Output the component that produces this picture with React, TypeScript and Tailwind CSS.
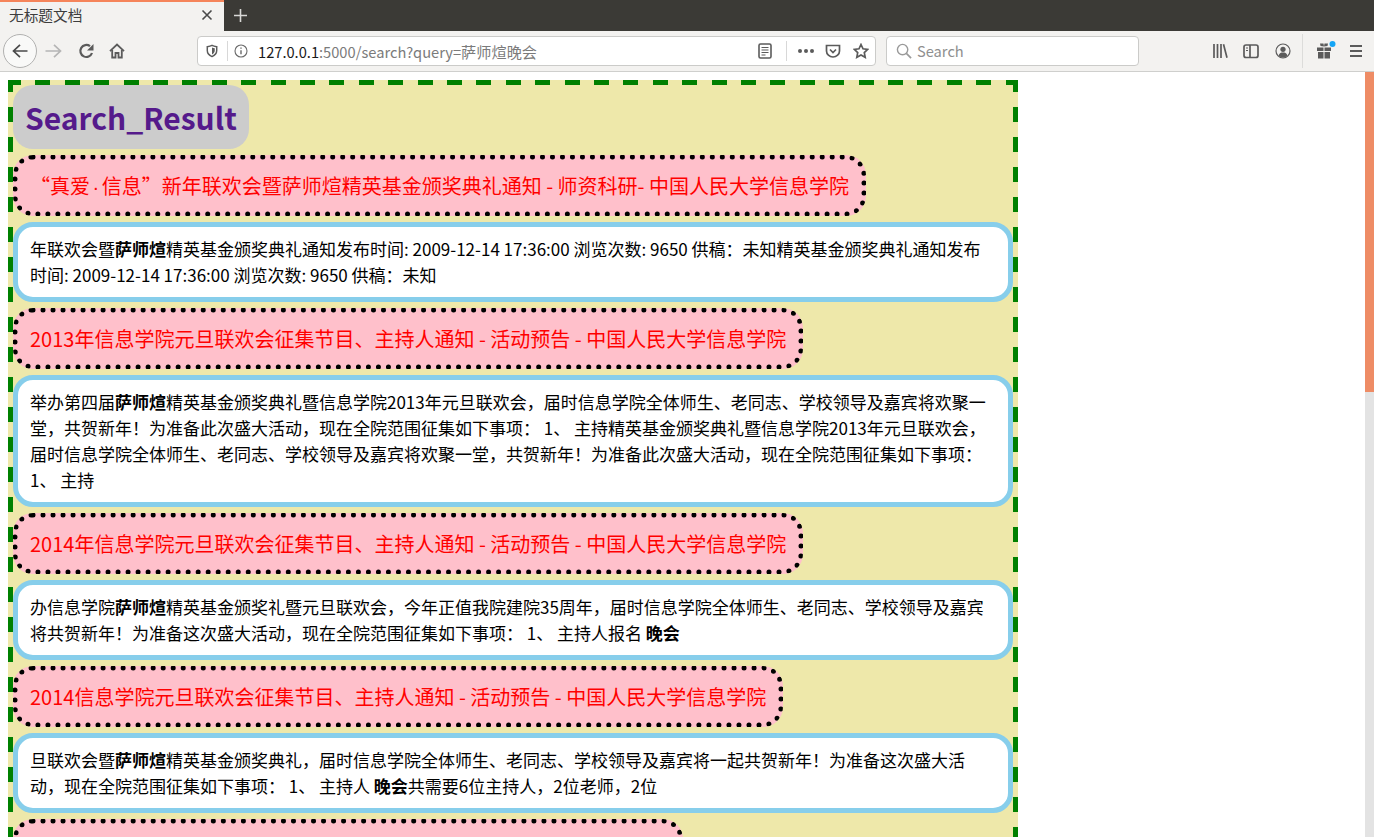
import React from "react";

const stroke = "#5b5b5b";

function Back() {
  return (
    <svg width="16" height="16" viewBox="0 0 16 16" fill="none" stroke="#4a4a4a" strokeWidth="1.7">
      <path d="M15.5 8H1.500M8 1.800L1.500 8 8 14.200" />
    </svg>
  );
}
function Forward() {
  return (
    <svg width="17" height="16" viewBox="0 0 17 16" fill="none" stroke="#b5b5b5" strokeWidth="1.7">
      <path d="M0.500 8h15M9 1.800L15.500 8 9 14.200" />
    </svg>
  );
}
function Reload() {
  return (
    <svg width="16" height="16" viewBox="0 0 16 16" fill="none" stroke={stroke} strokeWidth="2.2">
      <path d="M14 10a6 6 0 1 1-2-6.800" />
      <path d="M15.500 1v6.500H9z" fill={stroke} stroke="none" />
    </svg>
  );
}
function Home() {
  return (
    <svg width="16" height="16" viewBox="0 0 16 16" fill="none" stroke={stroke} strokeWidth="1.800">
      <path d="M1 8.200L8 1.500l7 6.700" />
      <path d="M3.200 7v7.500h3.300V10h3v4.500h3.300V7" />
    </svg>
  );
}
function Shield() {
  return (
    <svg width="12" height="14" viewBox="0 0 14 15" fill="none" stroke={stroke} strokeWidth="1.700">
      <path d="M1.500 2.500C4 2.200 5.500 1.800 7 1c1.500.8 3 1.200 5.500 1.500v4.500c0 3-2 5.500-5.500 7C3.500 12.500 1.500 10 1.500 7z" />
      <path d="M7 3.500c1 .5 2 .7 3.200.9v2.800C10.200 9 9 10.500 7 11.500z" fill={stroke} stroke="none" />
    </svg>
  );
}
function Info() {
  return (
    <svg width="14" height="14" viewBox="0 0 14 14" fill="none" stroke="#6a6a6a" strokeWidth="1.100">
      <circle cx="7" cy="7" r="6" />
      <path d="M7 6.200v4M7 3.500v1.300" strokeWidth="1.400" />
    </svg>
  );
}
function Reader() {
  return (
    <svg width="14" height="16" viewBox="0 0 14 16" fill="none" stroke={stroke} strokeWidth="1.600">
      <rect x="1" y="1" width="12" height="14" rx="1.500" />
      <path d="M3.500 4.500h7M3.500 7h7M3.500 9.500h7M3.500 12h4" strokeWidth="1.100" />
    </svg>
  );
}
function Pocket() {
  return (
    <svg width="16" height="16" viewBox="0 0 16 16" fill="none" stroke={stroke} strokeWidth="1.700">
      <path d="M1.500 2.500h13V8a6.500 6 0 0 1-13 0z" />
      <path d="M5 6.500l3 3 3-3" />
    </svg>
  );
}
function Star() {
  return (
    <svg width="16" height="16" viewBox="0 0 16 16" fill="none" stroke={stroke} strokeWidth="1.700">
      <path d="M8 1.500l2 4.300 4.700.6-3.400 3.200.9 4.700L8 12l-4.200 2.300.9-4.700L1.300 6.400 6 5.800z" />
    </svg>
  );
}
function SearchGlass() {
  return (
    <svg width="16" height="16" viewBox="0 0 17 17" fill="none" stroke="#9a9a9a" strokeWidth="1.500">
      <circle cx="7" cy="7" r="5.500" />
      <path d="M11 11l5 5" strokeWidth="1.800" />
    </svg>
  );
}
function Library() {
  return (
    <svg width="16" height="16" viewBox="0 0 16 16" fill="none" stroke={stroke} strokeWidth="1.700">
      <path d="M2 1v14M5.500 1v14M9 1v14M11.500 1.300l3.500 13.400" />
    </svg>
  );
}
function Sidebar() {
  return (
    <svg width="16" height="16" viewBox="0 0 16 16" fill="none" stroke={stroke} strokeWidth="1.700">
      <rect x="1" y="2" width="14" height="12.500" rx="2" />
      <path d="M7 2v12.500" />
      <path d="M3 5h2M3 7.500h2" strokeWidth="1.200" />
    </svg>
  );
}
function Account() {
  return (
    <svg width="16" height="16" viewBox="0 0 16 16" fill="none" stroke={stroke} strokeWidth="1.200">
      <circle cx="8" cy="8" r="7" />
      <circle cx="8" cy="6.300" r="2.600" fill={stroke} stroke="none" />
      <path d="M3.500 12.500c1-2.500 2.500-3 4.500-3s3.500.5 4.500 3C11.500 14 9.500 14.500 8 14.500S4.500 14 3.500 12.500z" fill={stroke} stroke="none" />
    </svg>
  );
}
function Gift() {
  return (
    <svg width="20" height="20" viewBox="0 0 20 20" fill={stroke}>
      <rect x="1" y="6.500" width="6.500" height="3.500" />
      <rect x="8.500" y="6.500" width="6.500" height="3.500" />
      <rect x="2" y="11" width="5.500" height="6.500" />
      <rect x="8.500" y="11" width="5.500" height="6.500" />
      <path d="M4 2.500h3.500L8 5.500 4.500 5zM12 2.500H8.500L8 5.500l3.500-.5z" />
      <circle cx="16.500" cy="3" r="3" fill="#14a5f5" />
    </svg>
  );
}
function Menu() {
  return (
    <svg width="14" height="14" viewBox="0 0 14 14" fill="none" stroke={stroke} strokeWidth="1.800">
      <path d="M1 2h12M1 7h12M1 12h12" />
    </svg>
  );
}

type R = { title: React.ReactNode; body: React.ReactNode };

const B = ({ children }: { children: React.ReactNode }) => <b className="font-bold">{children}</b>;

const results: R[] = [
  {
    title: (
      <>
        “真爱<span className="font-['Liberation_Sans',sans-serif] leading-[0] px-[2.5px]">·</span>信息”新年联欢会暨萨师煊精英基金颁奖典礼通知 - 师资科研- 中国人民大学信息学院
      </>
    ),
    body: (
      <>
        年联欢会暨<B>萨师煊</B>精英基金颁奖典礼通知发布时间: 2009-12-14 17:36:00 浏览次数: 9650 供稿：未知精英基金颁奖典礼通知发布时间: 2009-12-14 17:36:00 浏览次数: 9650 供稿：未知
      </>
    ),
  },
  {
    title: "2013年信息学院元旦联欢会征集节目、主持人通知 - 活动预告 - 中国人民大学信息学院",
    body: (
      <>
        举办第四届<B>萨师煊</B>精英基金颁奖典礼暨信息学院2013年元旦联欢会，届时信息学院全体师生、老同志、学校领导及嘉宾将欢聚一堂，共贺新年！为准备此次盛大活动，现在全院范围征集如下事项： 1、 主持精英基金颁奖典礼暨信息学院2013年元旦联欢会，届时信息学院全体师生、老同志、学校领导及嘉宾将欢聚一堂，共贺新年！为准备此次盛大活动，现在全院范围征集如下事项： 1、 主持
      </>
    ),
  },
  {
    title: "2014年信息学院元旦联欢会征集节目、主持人通知 - 活动预告 - 中国人民大学信息学院",
    body: (
      <>
        办信息学院<B>萨师煊</B>精英基金颁奖礼暨元旦联欢会，今年正值我院建院35周年，届时信息学院全体师生、老同志、学校领导及嘉宾将共贺新年！为准备这次盛大活动，现在全院范围征集如下事项： 1、 主持人报名 <B>晚会</B>
      </>
    ),
  },
  {
    title: "2014信息学院元旦联欢会征集节目、主持人通知 - 活动预告 - 中国人民大学信息学院",
    body: (
      <>
        旦联欢会暨<B>萨师煊</B>精英基金颁奖典礼，届时信息学院全体师生、老同志、学校领导及嘉宾将一起共贺新年！为准备这次盛大活动，现在全院范围征集如下事项： 1、 主持人 <B>晚会</B>共需要6位主持人，2位老师，2位
      </>
    ),
  },
  { title: "2012年信息学院元旦联欢会节目征集 - 活动预告 - 中国人民大学信息学院", body: null },
];

export default function App() {
  return (
    <div className="h-[837px] w-[1374px] overflow-hidden flex flex-col bg-white font-['Noto_Sans_CJK_SC','Noto_Sans',sans-serif]">
      {/* tab strip */}
      <div className="h-[31px] shrink-0 flex bg-[#3b3a36]">
        <div className="w-[224px] bg-[#f3f2f0] border-t-[2px] border-[#f5845a] flex items-center pl-[9px] pr-[11px] pb-[3px] text-[14.667px] text-[#3d3d3d] justify-between">
          <span>无标题文档</span>
          <svg width="12" height="12" viewBox="0 0 12 12" stroke="#4a4a4a" strokeWidth="1.600" fill="none">
            <path d="M1.500 1.500l9 9M10.500 1.500l-9 9" />
          </svg>
        </div>
        <div className="ml-[9px] flex items-center">
          <svg width="15" height="15" viewBox="0 0 15 15" stroke="#d8d8d6" strokeWidth="1.600" fill="none">
            <path d="M7.500 1v13M1 7.500h13" />
          </svg>
        </div>
      </div>
      {/* toolbar */}
      <div className="h-[41px] shrink-0 bg-[#f3f2f0] border-b border-[#cfcfcd] flex items-center">
        <div className="ml-[3px] w-[34px] h-[34px] rounded-full border border-[#b1b1b0] bg-[#f9f9f8] flex items-center justify-center">
          <Back />
        </div>
        <div className="ml-[8px]"><Forward /></div>
        <div className="ml-[16px]"><Reload /></div>
        <div className="ml-[15px]"><Home /></div>
        <div className="ml-[72px] h-[30px] w-[679px] bg-white border border-[#cbcbc9] rounded-[4px] flex items-center">
          <div className="ml-[8px]"><Shield /></div>
          <div className="ml-[9px] w-px h-[20px] bg-[#d8d8d8]" />
          <div className="ml-[6px]"><Info /></div>
          <div className="ml-[10px] text-[14.667px] text-[#7b7b7b] whitespace-nowrap">
            <span className="text-[#1a1a1a]">127.0.0.1</span>:5000/search?query=<span className="text-[15.2px]">萨师煊晚会</span>
          </div>
          <div className="flex-1" />
          <Reader />
          <div className="ml-[14px] w-px h-[20px] bg-[#d8d8d8]" />
          <div className="ml-[11px] flex gap-[2px]">
            <span className="w-[4px] h-[4px] rounded-full bg-[#5b5b5b]" />
            <span className="w-[4px] h-[4px] rounded-full bg-[#5b5b5b]" />
            <span className="w-[4px] h-[4px] rounded-full bg-[#5b5b5b]" />
          </div>
          <div className="ml-[11px]"><Pocket /></div>
          <div className="ml-[12px] mr-[6px]"><Star /></div>
        </div>
        <div className="ml-[10px] h-[30px] w-[253px] bg-white border border-[#cbcbc9] rounded-[4px] flex items-center pl-[9px]">
          <SearchGlass />
          <span className="ml-[5px] text-[14.667px] text-[#8f8f8f]">Search</span>
        </div>
        <div className="ml-[73px]"><Library /></div>
        <div className="ml-[15px]"><Sidebar /></div>
        <div className="ml-[16px]"><Account /></div>
        <div className="ml-[11px] w-px h-[34px] bg-[#dcdcda]" />
        <div className="ml-[13px]"><Gift /></div>
        <div className="ml-[13px]"><Menu /></div>
      </div>
      {/* page */}
      <div className="flex-1 min-h-0 flex">
        <div className="flex-1 min-w-0 overflow-hidden p-2">
          <div className="w-[1010px] border-[5px] border-transparent [background:repeating-linear-gradient(90deg,#008000_-2px,#008000_13px,transparent_13px,transparent_27.4px)_0_0/100%_5px_no-repeat_border-box,repeating-linear-gradient(90deg,#008000_-2px,#008000_13px,transparent_13px,transparent_27.4px)_0_100%/100%_5px_no-repeat_border-box,repeating-linear-gradient(180deg,#008000_-3px,#008000_12px,transparent_12px,transparent_27px)_0_0/5px_100%_no-repeat_border-box,repeating-linear-gradient(180deg,#008000_-3px,#008000_12px,transparent_12px,transparent_27px)_100%_0/5px_100%_no-repeat_border-box,#eee8aa]">
            <h1 className="inline-block align-top rounded-[20px] bg-[#cccccc] pl-[12px] pr-[12px] py-[10px] text-[30px] font-bold text-[#551a8b] leading-[44px]">
              Search_Result
            </h1>
            {results.map((r, i) => (
              <div key={i}>
                <div className="mt-[6px] inline-block align-top rounded-[20px] border-[5px] border-dotted border-black bg-[#ffc0cb] px-[12px] py-[11px] text-[20px] leading-[29px] text-[#ff0000]">
                  {r.title}
                </div>
                {r.body && (
                  <div className="mt-[6px] rounded-[20px] border-[5px] border-[#87ceeb] bg-white px-[12px] py-[9px] text-[17px] leading-[26px] text-black">
                    {r.body}
                  </div>
                )}
              </div>
            ))}
          </div>
        </div>
        <div className="w-[9px] shrink-0 bg-[#e3e3e3]">
          <div className="h-[320px] bg-[#ee8c65]" />
        </div>
      </div>
    </div>
  );
}
